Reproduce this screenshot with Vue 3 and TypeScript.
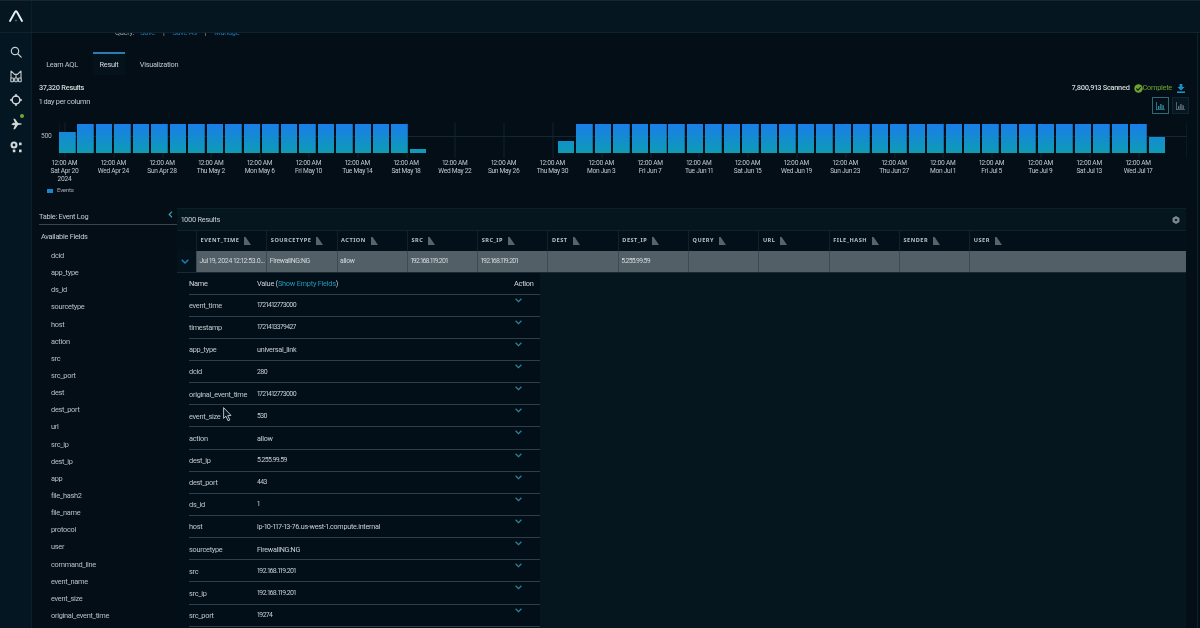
<script setup lang="ts">
const full = 29
const barHeights: number[] = Array.from({ length: 60 }, (_, i) => {
  if (i === 0) return 21
  if (i === 19) return 4
  if (i > 19 && i < 27) return 0
  if (i === 27) return 12
  if (i === 59) return 16
  return full
})
const dates = [
  ['Sat Apr 20', '2024'], ['Wed Apr 24'], ['Sun Apr 28'], ['Thu May 2'], ['Mon May 6'], ['Fri May 10'],
  ['Tue May 14'], ['Sat May 18'], ['Wed May 22'], ['Sun May 26'], ['Thu May 30'], ['Mon Jun 3'],
  ['Fri Jun 7'], ['Tue Jun 11'], ['Sat Jun 15'], ['Wed Jun 19'], ['Sun Jun 23'], ['Thu Jun 27'],
  ['Mon Jul 1'], ['Fri Jul 5'], ['Tue Jul 9'], ['Sat Jul 13'], ['Wed Jul 17'],
]
const fields = ['dcid', 'app_type', 'ds_id', 'sourcetype', 'host', 'action', 'src', 'src_port', 'dest', 'dest_port', 'url', 'src_ip', 'dest_ip', 'app', 'file_hash2', 'file_name', 'protocol', 'user', 'command_line', 'event_name', 'event_size', 'original_event_time']
const columns = ['EVENT_TIME', 'SOURCETYPE', 'ACTION', 'SRC', 'SRC_IP', 'DEST', 'DEST_IP', 'QUERY', 'URL', 'FILE_HASH', 'SENDER', 'USER']
const cells = ['Jul 19, 2024 12:12:53.0...', 'FirewallNG:NG', 'allow', '192.168.119.201', '192.168.119.201', '', '5.255.99.59', '', '', '', '', '']
const details: [string, string][] = [
  ['event_time', '1721412773000'], ['timestamp', '1721413379427'], ['app_type', 'universal_link'], ['dcid', '280'],
  ['original_event_time', '1721412773000'], ['event_size', '530'], ['action', 'allow'], ['dest_ip', '5.255.99.59'],
  ['dest_port', '443'], ['ds_id', '1'], ['host', 'ip-10-117-13-76.us-west-1.compute.internal'], ['sourcetype', 'FirewallNG:NG'],
  ['src', '192.168.119.201'], ['src_ip', '192.168.119.201'], ['src_port', '19274'],
]
const isNum = (v: string): boolean => /^\d/.test(v)
</script>

<template>
  <div class="app">
    <header class="topbar">
      <div class="logo-cell">
        <svg width="16" height="14" viewBox="0 0 16 14" fill="none">
          <path d="M2 12 L7 3 Q8 1.6 9 3 L14 12" stroke="#e8eef0" stroke-width="1.9" stroke-linecap="round" stroke-linejoin="round" />
          <circle cx="8" cy="11.5" r="1" fill="#4a6570" />
        </svg>
      </div>
    </header>
    <div class="body">
      <nav class="rail">
        <svg class="ico" width="12" height="12" viewBox="0 0 12 12" fill="none" stroke="#c4ccd0" stroke-width="1.2">
          <circle cx="5" cy="5" r="3.7" /><path d="M8 8 L11.2 11.2" stroke-linecap="round" />
        </svg>
        <svg class="ico" width="12" height="13" viewBox="0 0 12 13" fill="none" stroke="#c4ccd0" stroke-width="1.1">
          <path d="M1 .8 L4.6 4.4 H7.4 L11 .8 M1 .8 V8 M11 .8 V8 M6 4.4 V8" />
          <rect x=".8" y="8" width="2.6" height="3.8" rx=".6" /><rect x="4.7" y="8" width="2.6" height="3.8" rx=".6" /><rect x="8.6" y="8" width="2.6" height="3.8" rx=".6" />
        </svg>
        <svg class="ico" width="12" height="12" viewBox="0 0 12 12" fill="none" stroke="#d2d8dc" stroke-width="1.5">
          <circle cx="6" cy="6" r="3.9" /><path d="M6 0 V3 M6 9 V12 M0 6 H3 M9 6 H12" />
        </svg>
        <div class="plane">
          <svg class="ico" width="12" height="12" viewBox="0 0 12 12" fill="#d2d8dc">
            <path d="M0.5 6 L2 6 L3 4.8 L5 5 L3.3 0.8 L5 0.8 L8 5 L11.5 5.4 Q12 6 11.5 6.6 L8 7 L5 11.2 L3.3 11.2 L5 7 L3 7.2 L2 6.6Z" />
          </svg>
          <span class="dot"></span>
        </div>
        <svg class="ico" width="12" height="12" viewBox="0 0 12 12" fill="#d2d8dc">
          <path fill-rule="evenodd" d="M4 0.5 A3.5 3.5 0 1 1 4 7.5 A3.5 3.5 0 1 1 4 0.5Z M4 2.6 A1.4 1.4 0 1 0 4 5.4 A1.4 1.4 0 1 0 4 2.6Z" />
          <rect x="9" y="1.6" width="2.6" height="2.6" rx=".5" /><rect x="9" y="8.6" width="2.6" height="2.6" rx=".5" /><rect x="2.8" y="8.6" width="2.6" height="2.6" rx=".5" />
        </svg>
      </nav>
      <main class="main">
        <div class="query">
          <span class="q-label">Query:</span><a>Save</a><i>|</i><a>Save As</a><i>|</i><a>Manage</a>
        </div>
        <div class="tabs">
          <span class="tab tab-a">Learn AQL</span>
          <span class="tab tab-b active">Result</span>
          <span class="tab tab-c">Visualization</span>
        </div>
        <div class="summary">
          <div class="summary-l">
            <div class="strong">37,320 Results</div>
            <div class="sub">1 day per column</div>
          </div>
          <div class="summary-r">
            <div class="status">
              <span class="strong">7,800,913 Scanned</span>
              <svg width="9" height="9" viewBox="0 0 10 10"><circle cx="5" cy="5" r="4.7" fill="#6fa32d" /><path d="M2.6 5 L4.4 6.8 L7.6 3.4" fill="none" stroke="#0a1a18" stroke-width="1.3" /></svg>
              <span class="complete">Complete</span>
              <svg class="dl" width="8" height="9" viewBox="0 0 8 9" fill="#1c8fc4"><path d="M2.6 0 H5.4 V3 H7.6 L4 6.6 L0.4 3 H2.6Z" /><rect x="0" y="7.4" width="8" height="1.6" /></svg>
            </div>
            <div class="toggles">
              <span class="toggle on"><svg width="9" height="8" viewBox="0 0 9 8" fill="#2f8c9c"><path d="M0 0 H.8 V7.2 H9 V8 H0Z M2 4 H3.4 V7 H2Z M4.2 2 H5.6 V7 H4.2Z M6.4 3.2 H7.8 V7 H6.4Z" /></svg></span>
              <span class="toggle"><svg width="9" height="8" viewBox="0 0 9 8" fill="#67747b"><path d="M0 0 H.8 V7.2 H9 V8 H0Z M2 4 H3.4 V7 H2Z M4.2 2 H5.6 V7 H4.2Z M6.4 3.2 H7.8 V7 H6.4Z" /></svg></span>
            </div>
          </div>
        </div>
        <div class="chart">
          <span class="y-label">500</span>
          <div class="plot">
            <span v-for="(h, i) in barHeights" :key="i" class="bar" :style="{ height: h + 'px' }"></span>
          </div>
        </div>
        <div class="x-labels">
          <div v-for="d in dates" :key="d[0]" class="x-label">
            <div>12:00 AM</div>
            <div v-for="l in d" :key="l">{{ l }}</div>
          </div>
        </div>
        <div class="legend"><span class="swatch"></span>Events</div>
        <div class="content">
          <aside class="fields">
            <div class="fields-title">
              <span>Table: Event Log</span>
              <svg width="5" height="7" viewBox="0 0 5 7" fill="none" stroke="#3a9cb4" stroke-width="1.3"><path d="M4 .6 L1.2 3.5 L4 6.4" /></svg>
            </div>
            <div class="fields-head">Available Fields</div>
            <div v-for="f in fields" :key="f" class="field">{{ f }}</div>
          </aside>
          <section class="panel">
            <div class="panel-head">
              <span>1000 Results</span>
              <svg width="8" height="8" viewBox="0 0 7 7"><path d="M3.5 0 L6.5 1.75 V5.25 L3.5 7 L.5 5.25 V1.75Z" fill="#7d8a91" /><circle cx="3.5" cy="3.5" r="1.2" fill="#14242e" /></svg>
            </div>
            <div class="grid grid-head">
              <span class="cell-x"></span>
              <span v-for="c in columns" :key="c" class="th">
                {{ c }}
                <svg width="7" height="8" viewBox="0 0 7 8" fill="#56646c"><path d="M0 0 H1.6 L7 8 H0Z" /></svg>
              </span>
            </div>
            <div class="grid grid-row">
              <span class="cell-x sel">
                <svg width="8" height="5" viewBox="0 0 8 5" fill="none" stroke="#1b82b8" stroke-width="1.4"><path d="M.7 .8 L4 4 L7.3 .8" /></svg>
              </span>
              <span v-for="(c, i) in cells" :key="i" class="td" :class="{ num: isNum(c) }">{{ c }}</span>
            </div>
            <div class="detail">
              <div class="d-head">
                <span class="d-name">Name</span>
                <span class="d-val">Value (<a>Show Empty Fields</a>)</span>
                <span class="d-act">Action</span>
              </div>
              <div v-for="d in details" :key="d[0]" class="d-row">
                <span class="d-name">{{ d[0] }}</span>
                <span class="d-val" :class="{ num: isNum(d[1]) }">{{ d[1] }}</span>
                <svg class="d-chev" width="7" height="5" viewBox="0 0 7 5" fill="none" stroke="#2c86a0" stroke-width="1.2"><path d="M.6 .8 L3.5 3.6 L6.4 .8" /></svg>
              </div>
            </div>
          </section>
        </div>
        <svg class="cursor" width="9" height="15" viewBox="0 0 9 15" fill="#0a1720" stroke="#c8d0d4" stroke-width=".9">
          <path d="M.6 .6 V11.4 L3 9.2 L5 13.8 L6.8 13 L4.8 8.6 L8 8.4Z" />
        </svg>
      </main>
    </div>
  </div>
</template>

<style>
html, body { margin: 0; background: #030e17; }
</style>

<style scoped>
.app {
  width: 1200px; height: 628px; overflow: hidden; display: flex; flex-direction: column;
  background: #030e17; color: #c4ccd1; font-family: Roboto, "Liberation Sans", sans-serif; font-size: 7.4px; line-height: 1;
  letter-spacing: -.28px; font-variant-numeric: proportional-nums; white-space: nowrap;
  filter: blur(.3px);
}
.topbar { height: 33px; flex: none; display: flex; background: #051620; border-bottom: 1px solid #0e232d; box-sizing: border-box; border-top: 1px solid #16262e; }
.logo-cell { width: 32px; display: flex; align-items: center; justify-content: center; border-right: 1px solid #0b1f29; box-sizing: border-box; padding-bottom: 1px; }
.body { flex: 1; display: flex; min-height: 0; }
.rail { width: 32px; flex: none; box-sizing: border-box; background: #041621; border-right: 1px solid #0b1f29; display: flex; flex-direction: column; align-items: center; padding-top: 13px; gap: 11.5px; }
.ico { display: block; }
.plane { position: relative; }
.dot { position: absolute; left: 10px; top: -4px; width: 4px; height: 4px; border-radius: 50%; background: #6ea92f; }
.main { position: relative; width: 1166px; flex: none; box-sizing: border-box; padding: 0 10px 0 7px; border-right: 1px solid #0e222c; }
.query { height: 3px; overflow: hidden; display: flex; align-items: flex-end; padding-left: 76px; color: #9aa5ab; }
.query a { color: #1f76ae; }
.query a:first-of-type { margin-left: 6px; }
.query i { font-style: normal; margin: 0 8px; }
.tabs { margin-top: 16px; height: 23px; display: flex; }
.tab { display: flex; align-items: center; justify-content: center; height: 23px; color: #bcc5ca; box-sizing: border-box; border-top: 2px solid transparent; }
.tab-a { margin-left: 8px; width: 30px; }
.tab-b { margin-left: 16px; width: 32px; }
.tab-c { margin-left: 15px; width: 38px; }
.active { border-top-color: #2a7db4; color: #d2d9dc; background: #04121c; }
.summary { height: 41px; margin-top: 7px; display: flex; justify-content: space-between; }
.strong { color: #d2d9dc; font-weight: 500; }
.summary-l .strong { line-height: 12px; }
.sub { margin-top: 2px; line-height: 12px; }
.summary-r { display: flex; flex-direction: column; align-items: flex-end; }
.status { display: flex; align-items: center; height: 12px; gap: 4px; margin-right: 2px; }
.complete { color: #6fa32f; margin-left: -4px; }
.dl { margin-left: 1px; }
.toggles { display: flex; gap: 3px; margin: 3px -2px 0 0; }
.toggle { width: 17px; height: 17px; box-sizing: border-box; border: 1px solid #0f2630; display: flex; align-items: center; justify-content: center; background: #071722; }
.toggle.on { border-color: #2d6a74; background: #03101a; }
.chart { display: flex; height: 35px; }
.y-label { width: 20px; flex: none; padding: 9px 0 0 2px; box-sizing: border-box; color: #b4bec3; line-height: 8px; font-size: 6.6px; }
.plot {
  flex: 1; display: flex; align-items: flex-end; gap: 1.97px; box-sizing: border-box; padding-bottom: 5px;
  background:
    linear-gradient(#14262f, #14262f) 0 13px / 100% 1px no-repeat,
    repeating-linear-gradient(90deg, #11222b 0 1px, transparent 1px 48.8px) 5.5px 0;
}
.bar { width: 16.5px; flex: none; background: linear-gradient(#1a7dea, #0d9cb4) bottom / 100% 29px no-repeat; }
.x-labels { display: flex; height: 26px; padding-top: 1px; box-sizing: border-box; margin-left: 1.1px; }
.x-label { width: 48.8px; flex: none; text-align: center; line-height: 8px; font-size: 6.6px; color: #c0c9ce; }
.legend { display: flex; align-items: center; gap: 4px; margin: 3px 0 0 8px; height: 7px; font-size: 6.2px; color: #9ca7ad; }
.swatch { width: 6px; height: 4px; background: #1787cf; }
.content { display: flex; margin-top: 14px; }
.fields { width: 138px; flex: none; }
.fields-title { height: 17px; box-sizing: border-box; display: flex; justify-content: space-between; align-items: center; padding: 2px 4px 0 0; border-bottom: 1px solid #39464d; }
.fields-title svg { margin-top: -5px; }
.fields-head { margin: 6px 0 5px 2px; height: 11px; line-height: 11px; }
.field { margin-left: 12px; height: 17.15px; line-height: 17.15px; color: #b6c0c5; }
.panel { width: 1009px; flex: none; background: #06161f; border-top: 1px solid #0c2029; box-sizing: border-box; height: 420px; }
.panel-head { height: 21px; display: flex; justify-content: space-between; align-items: center; padding: 0 6px 0 4px; color: #c6ced3; }
.grid { display: grid; grid-template-columns: 19px repeat(11, 70.3px) 1fr; }
.grid-head { height: 21px; background: #041019; border-top: 1px solid #0f232c; box-sizing: border-box; }
.th { display: flex; align-items: center; gap: 5px; padding-left: 3.5px; border-left: 1px solid #102229; font-family: "Noto Sans", sans-serif; font-size: 5.6px; font-weight: 700; letter-spacing: .5px; color: #b7c1c6; box-sizing: border-box; }
.grid-row { height: 22px; background: #535f66; border-bottom: 1px solid #1a2a33; box-sizing: border-box; }
.cell-x { display: flex; align-items: center; justify-content: center; padding-right: 3px; }
.sel { background: #04121b; }
.td { display: flex; align-items: center; padding-left: 2.5px; border-left: 1px solid #3e4a51; color: #d2d8dc; overflow: hidden; box-sizing: border-box; font-size: 6.9px; letter-spacing: -.35px; }
.td.num { letter-spacing: -.72px; }
.detail { width: 363px; height: 380px; background: #030f18; box-sizing: border-box; padding-left: 12px; }
.d-head, .d-row { position: relative; width: 351px; display: flex; box-sizing: border-box; border-bottom: 1.4px solid #2e3e47; align-items: center; }
.d-head { height: 21.6px; color: #d0d7db; }
.d-row { height: 22.15px; padding-top: 1px; color: #bec7cc; }
.d-name { width: 68px; flex: none; }
.d-val { width: 257px; flex: none; color: #c6ced3; font-size: 7.2px; letter-spacing: -.26px; }
.d-val.num { font-size: 6.9px; letter-spacing: -.62px; }
.d-head .d-val { font-size: 7.4px; }
.d-val a { color: #2096b8; }
.d-chev { position: absolute; left: 326px; top: 3px; }
.cursor { position: absolute; left: 191px; top: 374px; }
</style>
